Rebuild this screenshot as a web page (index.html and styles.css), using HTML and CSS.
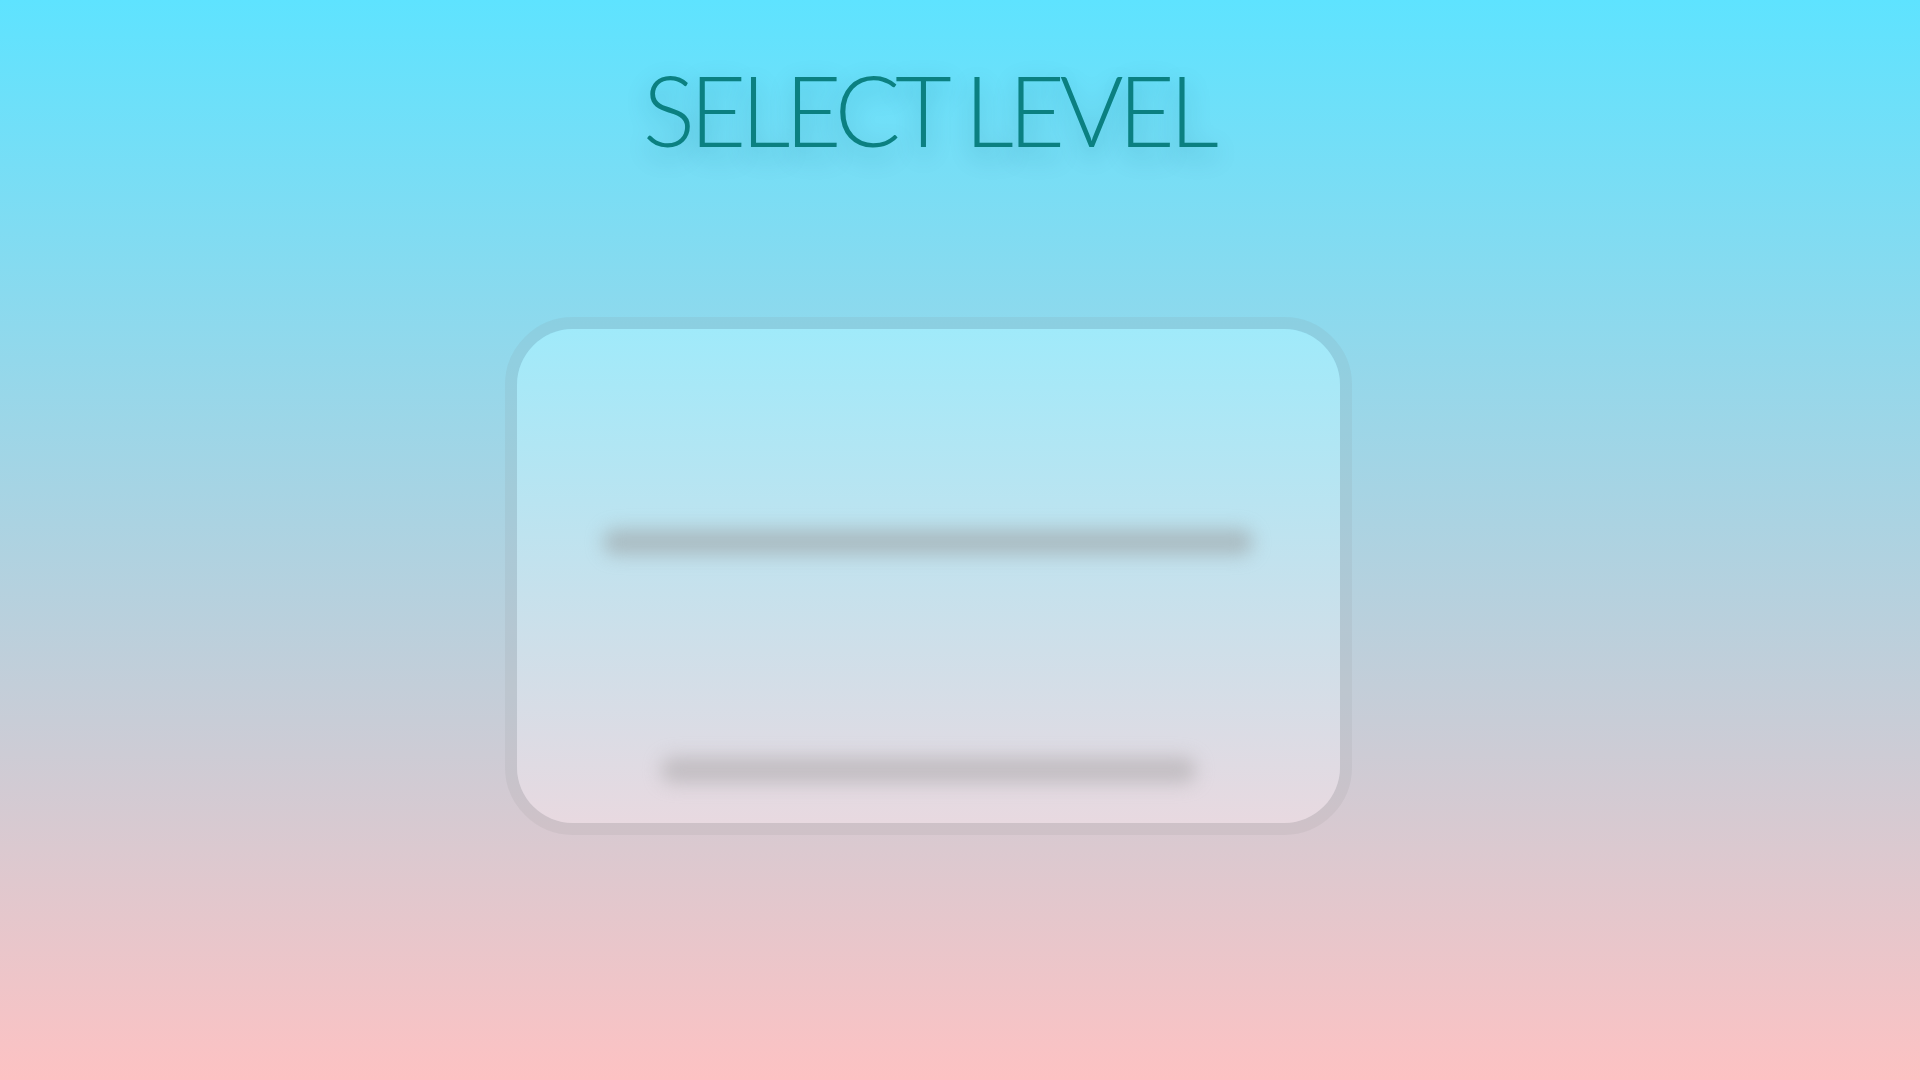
FILE: index.html
```html
<!DOCTYPE html>
<html lang="en">
<head>
<meta charset="utf-8">
<title>Select Level</title>
<link rel="stylesheet" href="styles.css">
</head>
<body>
<main class="screen">
  <h1 class="title">SELECT LEVEL</h1>
  <section class="card">
    <div class="card-inner">
      <div class="blur-line blur-line-main"></div>
      <div class="blur-line blur-line-sub"></div>
    </div>
  </section>
</main>
</body>
</html>
```
FILE: styles.css
```css
html, body {
  margin: 0;
  padding: 0;
  height: 100%;
}

body {
  background: linear-gradient(to bottom, #5ee3ff 0%, #fdc2c3 100%);
  font-family: "Lato", "Liberation Sans", sans-serif;
  overflow: hidden;
}

.screen {
  box-sizing: border-box;
  height: 100vh;
  padding: 60px 64px 0 0;
  display: flex;
  flex-direction: column;
  align-items: center;
}

.title {
  margin: 0;
  font-size: 98px;
  line-height: 1;
  font-weight: 300;
  letter-spacing: -5.6px;
  color: #0b8081;
  text-shadow: 0 8px 24px rgba(0, 85, 105, 0.32);
}

.card {
  margin-top: 159px;
  width: 847px;
  height: 518px;
  box-sizing: border-box;
  border: 12px solid rgba(130, 130, 130, 0.1);
  border-radius: 68px;
}

.card-inner {
  box-sizing: border-box;
  height: 100%;
  border-radius: 56px;
  background: linear-gradient(to bottom, #a0eafa 0%, #e8d9e0 100%);
  display: flex;
  flex-direction: column;
  align-items: center;
  padding-top: 200px;
}

.blur-line {
  height: 26px;
  border-radius: 13px;
  background: rgba(150, 150, 150, 0.5);
  filter: blur(9px);
}

.blur-line-main {
  width: 650px;
}

.blur-line-sub {
  width: 535px;
  margin-top: 202px;
  background: rgba(170, 165, 168, 0.55);
}
```
